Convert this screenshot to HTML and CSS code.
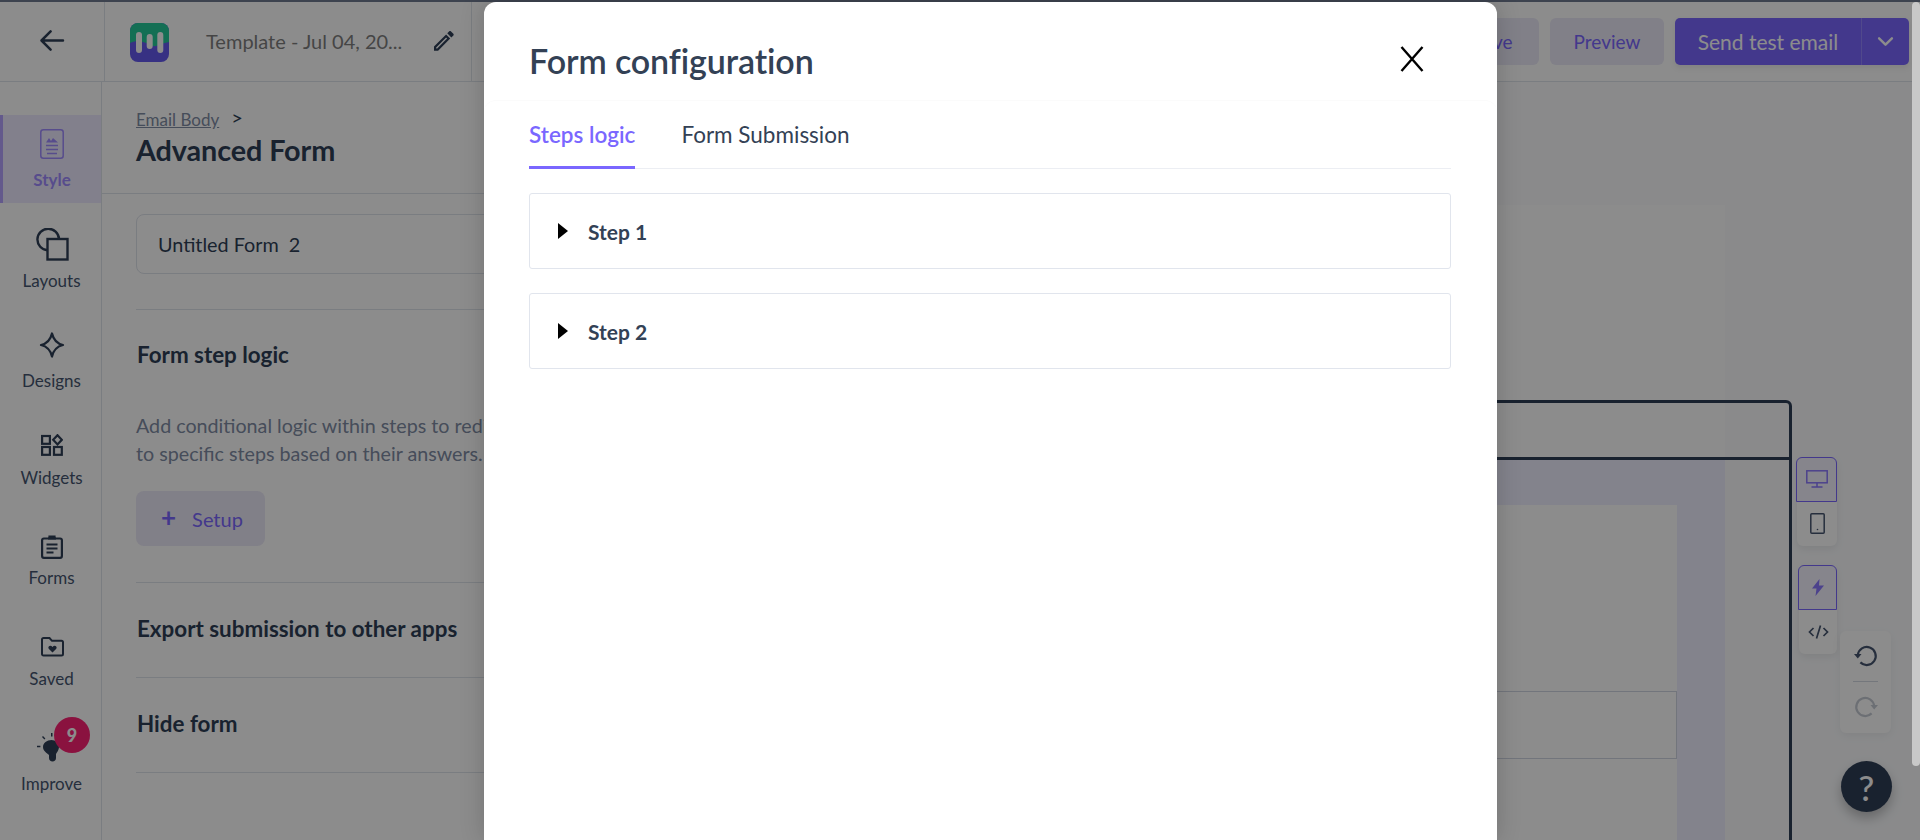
FILE: index.html
```html
<!DOCTYPE html>
<html lang="en">
<head>
<meta charset="utf-8">
<title>Form configuration</title>
<link rel="stylesheet" href="styles.css">
</head>
<body>
<div class="app">
  <div class="topline"></div>
  <header class="topbar">
    <div class="back-cell">
      <svg class="back-icon" viewBox="0 0 26 22" fill="none" stroke="currentColor" stroke-width="2.6" stroke-linecap="round" stroke-linejoin="round"><path d="M24 11H2M11 1.5 1.5 11l9.5 9.5"/></svg>
    </div>
    <div class="brand-cell">
      <svg class="logo" viewBox="0 0 39 39"><defs><clipPath id="lc"><rect width="39" height="39" rx="8"/></clipPath></defs><g clip-path="url(#lc)"><rect width="39" height="39" fill="#655aef"/><path d="M0 0h39v19c-6 1-9 3-13 4s-8-3-13-4-9-1-13 1z" fill="#25ca9a"/></g><rect x="6" y="9" width="6" height="21" rx="3" fill="#fff"/><rect x="16.700" y="11" width="6" height="15" rx="3" fill="#fff"/><rect x="27.300" y="9" width="6" height="21" rx="3" fill="#fff"/></svg>
      <span class="doc-name">Template - Jul 04, 20...</span>
      <svg class="pencil" viewBox="3 3 18.300 18.300" fill="currentColor"><path d="M3 17.250V21h3.750L17.810 9.940l-3.750-3.750L3 17.250zM5.920 19H5v-.92l9.060-9.060.92.92L5.920 19zM20.710 7.040c.39-.39.39-1.020 0-1.410l-2.340-2.340c-.39-.39-1.020-.39-1.410 0l-1.830 1.830 3.750 3.750 1.830-1.830z"/></svg>
    </div>
    <div class="top-actions">
      <button class="btn-soft btn-save">Save</button>
      <button class="btn-soft">Preview</button>
      <div class="send-group">
        <span class="send-label">Send test email</span>
        <span class="send-caret"><svg viewBox="0 0 18 12" fill="none" stroke="currentColor" stroke-width="2.6" stroke-linecap="round" stroke-linejoin="round"><path d="M2 2.500 9 9.500l7-7"/></svg></span>
      </div>
    </div>
  </header>

  <div class="workspace">
    <nav class="sidebar">
      <div class="nav-item nav-style is-active">
        <svg class="ic-style" viewBox="0 0 24 30" fill="none" stroke="currentColor" stroke-width="1.500"><rect x=".8" y=".8" width="22.400" height="28.400" rx="2.500"/><path d="M6 13.500 9 9l2 3 2-3 5 4.500z" fill="currentColor" stroke="none"/><path d="M6 16.500h12M6 20.500h12M7 24.500h10"/></svg>
        <span class="nav-label">Style</span>
      </div>
      <div class="nav-item nav-layouts">
        <svg class="ic-layouts" viewBox="0 0 33 33" fill="none" stroke="currentColor" stroke-width="2.400"><path d="M11.500 22.300A10.800 10.800 0 1 1 23 11"/><rect x="11.500" y="11" width="20" height="20.500"/></svg>
        <span class="nav-label">Layouts</span>
      </div>
      <div class="nav-item nav-designs">
        <svg class="ic-designs" viewBox="0 0 26 26" fill="none" stroke="currentColor" stroke-width="2.300" stroke-linejoin="round"><path d="M13 1.500c1.500 6.500 4.500 10 11 11.500-6.500 1.500-9.500 5-11 11.500C11.500 18 8.500 14.500 2 13 8.500 11.500 11.500 8 13 1.500z"/></svg>
        <span class="nav-label">Designs</span>
      </div>
      <div class="nav-item nav-widgets">
        <svg class="ic-widgets" viewBox="0 0 22 22" fill="none" stroke="currentColor" stroke-width="2.200"><rect x="1.100" y="2" width="7.800" height="7.800"/><rect x="1.100" y="13" width="7.800" height="7.800"/><rect x="13" y="13" width="7.800" height="7.800"/><path d="m16.500 1.200 4.300 4.600-4.300 4.600-4.300-4.600z"/></svg>
        <span class="nav-label">Widgets</span>
      </div>
      <div class="nav-item nav-forms">
        <svg class="ic-forms" viewBox="0 0 22 24" fill="none" stroke="currentColor" stroke-width="2.200"><rect x="1.100" y="3.500" width="19.800" height="19.400" rx="1.800"/><path d="M7 3.500h8M8.500 3.500V1.500h5v2M5.500 9.500h11M5.500 13.500h11M5.500 17.500h7" /></svg>
        <span class="nav-label">Forms</span>
      </div>
      <div class="nav-item nav-saved">
        <svg class="ic-saved" viewBox="0 0 23 20" fill="none" stroke="currentColor" stroke-width="2"><path d="M1 2.500C1 1.600 1.600 1 2.500 1h6l2.500 2.800h9.500c.9 0 1.500.6 1.500 1.500v11.700c0 .9-.6 1.500-1.500 1.500h-18C1.600 18.500 1 17.900 1 17z"/><path d="M11.500 15.500 7.700 11.700c-1.500-2.300 1.900-4.300 3.800-1.800 1.900-2.500 5.300-.5 3.800 1.800z" fill="currentColor" stroke="none"/></svg>
        <span class="nav-label">Saved</span>
      </div>
      <div class="nav-item nav-improve">
        <svg class="ic-improve" viewBox="0 0 24 30" fill="currentColor"><path d="M14.500 7c4 0 7.500 3 7.500 7 0 3-2 5-3 7v4c0 2-1.500 3.500-3.500 3.500S12 27 12 25v-3c-2-2-6-4-6-8 0-4 4-7 8.500-7z"/><path d="M14 0h1.500v3.500H14zM5 4l1-1 2.400 2.400-1 1zM0 12.800h3.400v1.500H0z"/></svg>
        <span class="nav-label">Improve</span>
        <span class="badge">9</span>
      </div>
    </nav>

    <section class="panel">
      <div class="panel-head">
        <div class="crumbs"><a class="crumb-link">Email Body</a><span class="crumb-sep">&gt;</span></div>
        <h1 class="panel-title">Advanced Form</h1>
      </div>
      <div class="panel-body">
        <div class="form-name">Untitled Form &nbsp;2</div>
        <div class="block block-logic">
          <h2 class="block-title">Form step logic</h2>
          <p class="block-text">Add conditional logic within steps to redirect users<br>to specific steps based on their answers.</p>
          <button class="btn-setup"><span class="plus">+</span>Setup</button>
        </div>
        <div class="block block-row"><h2 class="block-title">Export submission to other apps</h2></div>
        <div class="block block-row"><h2 class="block-title">Hide form</h2></div>
      </div>
    </section>

    <main class="canvas">
      <div class="paper">
        <div class="tint">
          <div class="sheet"><div class="sheet-field"></div></div>
        </div>
      </div>
      <div class="frame"><div class="frame-bar"></div></div>
      <div class="tools">
        <div class="tool-group tg-device">
          <div class="tool is-on"><svg class="ic-desktop" viewBox="0 0 22 18" fill="none" stroke="currentColor" stroke-width="1.500"><rect x=".8" y=".8" width="20.400" height="12"/><path d="M11 13v3.500M5.500 17h11"/></svg></div>
          <div class="tool"><svg class="ic-mobile" viewBox="0 0 15 21" fill="none" stroke="currentColor" stroke-width="1.500"><rect x=".8" y=".8" width="13.400" height="19.400" rx="1"/><circle cx="7.500" cy="16.500" r=".8" fill="currentColor" stroke="none"/></svg></div>
        </div>
        <div class="tool-group tg-mode">
          <div class="tool is-on"><svg class="ic-bolt" viewBox="0 0 12 17" fill="currentColor"><path d="M7.500 0 0 9.500h4.500L3.500 17 12 6.500H7z"/></svg></div>
          <div class="tool"><svg class="ic-code" viewBox="0 0 21 14" fill="none" stroke="currentColor" stroke-width="1.700"><path d="M5.500 3 1.500 7l4 4M15.500 3l4 4-4 4M12.500 .5l-4 13"/></svg></div>
        </div>
        <div class="history">
          <svg class="ic-hist" viewBox="0 0 24 24" fill="none" stroke="currentColor" stroke-width="2.200"><path d="M3.800 11a9 9 0 1 1 2.600 7.400"/><path d="M0 10h7.500l-3.700 4.500z" fill="currentColor" stroke="none"/></svg>
          <span class="hist-rule"></span>
          <svg class="ic-hist is-off" viewBox="0 0 24 24" fill="none" stroke="currentColor" stroke-width="2.200"><path d="M20.200 11a9 9 0 1 0-2.600 7.400"/><path d="M24 10h-7.500l3.700 4.500z" fill="currentColor" stroke="none"/></svg>
        </div>
        <div class="help">?</div>
      </div>
    </main>
  </div>

  <div class="overlay"></div>
  <div class="scrollbar"></div>

  <div class="modal" role="dialog">
    <div class="modal-head">
      <h2 class="modal-title">Form configuration</h2>
      <svg class="modal-close" viewBox="0 0 24 26" fill="none" stroke="#000" stroke-width="2.400"><path d="M1.500 1 22.500 25M22.500 1 1.500 25"/></svg>
    </div>
    <div class="modal-body">
      <div class="tabs">
        <div class="tab is-active">Steps logic</div>
        <div class="tab">Form Submission</div>
      </div>
      <div class="step"><span class="caret"></span><span class="step-name">Step 1</span></div>
      <div class="step"><span class="caret"></span><span class="step-name">Step 2</span></div>
    </div>
  </div>
</div>
</body>
</html>
```

FILE: styles.css
```css
:root {
  --ink: #2f3f57;
  --label: #45556f;
  --muted: #808ca4;
  --line: #dfe3ec;
  --brand: #7a67ff;
  --soft: #ebe9f7;
}
* { box-sizing: border-box; }
html, body { margin: 0; height: 100%; overflow: hidden; background: #fff; }
body { font-family: "Lato", "Liberation Sans", sans-serif; color: var(--ink); }
h1, h2, p { margin: 0; }
button { font: inherit; border: 0; padding: 0; }

.app { position: relative; width: 1920px; height: 840px; display: flex; flex-direction: column; overflow: hidden; }
.topline { height: 2px; background: #6f7a91; flex: none; }

/* top bar */
.topbar { height: 80px; flex: none; display: flex; align-items: stretch; border-bottom: 1px solid var(--line); background: #fff; }
.back-cell { width: 105px; border-right: 1px solid var(--line); display: flex; align-items: center; justify-content: center; }
.back-icon { width: 25px; height: 21px; color: var(--ink); margin: -3px 0 0 0; }
.brand-cell { width: 367px; border-right: 1px solid var(--line); display: flex; align-items: center; padding-left: 25px; }
.logo { width: 39px; height: 39px; flex: none; margin-top: 2px; }
.doc-name { margin: -1px 0 0 37px; font-size: 20px; color: #7f7f7f; white-space: nowrap; width: 228px; }
.pencil { width: 20px; height: 20px; color: var(--ink); margin: -2px 0 0 0; }
.top-actions { margin-left: auto; display: flex; align-items: center; gap: 11px; padding-right: 11px; }
.btn-soft { width: 114px; height: 47px; border-radius: 6px; background: var(--soft); color: var(--brand); font-size: 19px; }
.btn-save { padding-left: 22px; }
.send-group { width: 234px; height: 47px; border-radius: 5px; background: var(--brand); display: flex; color: #fff; align-items: stretch; box-shadow: 0 3px 6px rgba(0,0,0,.08); }
.send-label { flex: 1; font-size: 21px; display: flex; align-items: center; justify-content: center; }
.send-caret { width: 48px; border-left: 1px solid rgba(255,255,255,.2); display: flex; align-items: center; justify-content: center; }
.send-caret svg { width: 17px; height: 11px; }

/* workspace */
.workspace { flex: 1; min-height: 0; display: flex; }

.sidebar { width: 102px; flex: none; border-right: 1px solid var(--line); display: flex; flex-direction: column; background: #fff; color: var(--ink); padding-top: 33px; }
.nav-item { position: relative; display: flex; flex-direction: column; align-items: center; flex: none; padding-left: 2px; }
.nav-label { font-size: 17px; line-height: 20px; color: var(--label); }
.nav-item svg { flex: none; }
.nav-style { height: 88px; padding: 14px 0 0; background: #edeaff; border-left: 3px solid #b5a2ff; }
.nav-style .nav-label { font-weight: 700; color: #9f8bff; margin-top: 11px; }
.ic-style { width: 24px; height: 30px; color: #9f8bff; }
.nav-layouts { margin-top: 25px; }
.ic-layouts { width: 33px; height: 33px; margin: 0 0 10px 2px; }
.nav-designs { margin-top: 41px; }
.ic-designs { width: 26px; height: 26px; margin-bottom: 13px; }
.nav-widgets { margin-top: 43px; }
.ic-widgets { width: 22px; height: 22px; margin: 0 0 12px 1px; }
.nav-forms { margin-top: 47px; }
.ic-forms { width: 22px; height: 24px; margin: 0 0 9px 1px; }
.nav-saved { margin-top: 49px; }
.ic-saved { width: 23px; height: 20px; margin: 0 0 12px 1px; }
.nav-improve { margin-top: 44px; }
.ic-improve { width: 24px; height: 30px; margin: 0 0 11px -6px; }
.badge { position: absolute; left: 54px; top: -16px; width: 36px; height: 36px; border-radius: 50%; background: #fb2174; color: #fff; font-size: 18px; font-weight: 900; display: flex; align-items: center; justify-content: center; }

.panel { width: 480px; flex: none; background: #fff; border-right: 1px solid var(--line); }
.panel-head { height: 112px; border-bottom: 1px solid var(--line); padding: 26px 0 0 34px; }
.crumbs { display: flex; align-items: center; height: 22px; font-size: 17px; }
.crumb-link { color: var(--muted); text-decoration: underline; }
.crumb-sep { margin: -4px 0 0 12px; color: var(--ink); font-size: 20px; line-height: 20px; }
.panel-title { font-size: 28.800px; line-height: 36px; font-weight: 700; margin-top: 2px; letter-spacing: -.1px; }
.panel-body { padding: 20px 0 0 34px; }
.form-name { width: 445px; height: 60px; border: 1px solid var(--line); border-radius: 8px; display: flex; align-items: center; padding-left: 21px; font-size: 19.800px; color: var(--ink); }
.block { border-bottom: 1px solid var(--line); }
.block-logic { border-top: 1px solid var(--line); margin-top: 35px; height: 274px; padding-top: 30px; }
.block-row { height: 95px; display: flex; align-items: center; padding-bottom: 3px; }
.block-title { font-size: 22.400px; line-height: 30px; font-weight: 700; padding-left: 1px; }
.block-text { margin-top: 42px; font-size: 19.700px; line-height: 28px; color: var(--muted); white-space: nowrap; }
.btn-setup { margin-top: 23px; width: 129px; height: 55px; border-radius: 8px; background: var(--soft); color: var(--brand); font-size: 20px; display: flex; align-items: center; padding-left: 25px; }
.plus { font-size: 26px; font-weight: 700; margin-right: 16px; line-height: 1; margin-top: -3px; }

/* canvas */
.canvas { position: relative; flex: 1; background: #fbfcfe; padding: 123px 195px 0 0; display: flex; }
.paper { flex: 1; background: #fff; display: flex; flex-direction: column; padding-top: 255px; }
.tint { flex: 1; background: #eeeeff; padding: 45px 48px 0 70px; }
.sheet { background: #fff; height: 100%; padding-top: 186px; }
.sheet-field { height: 68px; border: 1px solid #cfd5e2; }
.frame { position: absolute; left: 40px; right: 128px; top: 318px; bottom: -10px; border: 3px solid var(--ink); border-radius: 0 6px 0 0; }
.frame-bar { height: 57px; border-bottom: 3px solid var(--ink); }

.tools { position: absolute; inset: 0; pointer-events: none; }
.tool-group { position: absolute; width: 40px; background: #fff; border-radius: 6px; box-shadow: 0 3px 8px rgba(0,0,0,.08); color: var(--label); }
.tg-device { left: 1215px; top: 375px; }
.tg-mode { left: 1217px; top: 483px; width: 38px; }
.tool { height: 44.500px; display: flex; align-items: center; justify-content: center; }
.tool.is-on { border: 1.500px solid var(--brand); border-radius: 6px 6px 0 0; background: #f4f2ff; color: #8b78ff; margin: 0 0 0 -1px; }
.ic-desktop { width: 22px; height: 18px; }
.ic-mobile { width: 15px; height: 21px; }
.ic-bolt { width: 12px; height: 17px; }
.ic-code { width: 21px; height: 14px; }
.history { position: absolute; left: 1258px; top: 549px; width: 51px; height: 102px; background: #fff; border-radius: 6px; box-shadow: 0 3px 10px rgba(0,0,0,.06); display: flex; flex-direction: column; align-items: center; padding-top: 13px; color: var(--label); }
.ic-hist { width: 24px; height: 24px; flex: none; }
.ic-hist.is-off { color: #c5cad3; }
.hist-rule { width: 25px; height: 1px; background: #d4d9e2; margin: 13px 0 13px; flex: none; }
.help { position: absolute; left: 1259px; top: 679px; width: 51px; height: 51px; border-radius: 50%; background: #2f3f57; color: #fff; font-size: 35px; font-weight: 500; display: flex; align-items: center; justify-content: center; box-shadow: 0 6px 12px rgba(0,0,0,.25); }

/* overlay layers */
.overlay { position: absolute; inset: 0; background: rgba(0,0,0,.45); }
.scrollbar { position: absolute; right: 0; top: 2px; width: 8px; height: 764px; background: #c8c8c8; border-radius: 4px; }

/* modal */
.modal { position: absolute; left: 484px; top: 2px; width: 1013px; height: 838px; background: #fff; border-radius: 12px 12px 0 0; box-shadow: 0 0 24px rgba(0,0,0,.18); }
.modal-head { height: 98px; position: relative; padding: 38px 46px 0 45px; }
.modal-title { font-size: 34px; line-height: 42px; font-weight: 600; color: #334155; letter-spacing: -.1px; }
.modal-close { position: absolute; left: 916px; top: 44px; width: 24px; height: 26px; }
.modal-body { padding: 0 46px 0 45px; border-top: 1px solid #fbfbfb; border-radius: 12px 12px 0 0; }
.tabs { display: flex; gap: 46px; height: 68px; border-bottom: 1px solid #eceef3; }
.tab { font-size: 22.500px; line-height: 68px; height: 68px; color: #334155; }
.tab.is-active { color: var(--brand); font-weight: 600; border-bottom: 3px solid var(--brand); }
.step { height: 76px; margin-top: 24px; border: 1px solid #e1e5ed; border-radius: 3px; display: flex; align-items: center; padding-left: 28px; }
.caret { width: 0; height: 0; border-left: 10px solid #000; border-top: 8px solid transparent; border-bottom: 8px solid transparent; margin-right: 20px; }
.step-name { font-size: 21px; font-weight: 700; color: #334155; }
```
